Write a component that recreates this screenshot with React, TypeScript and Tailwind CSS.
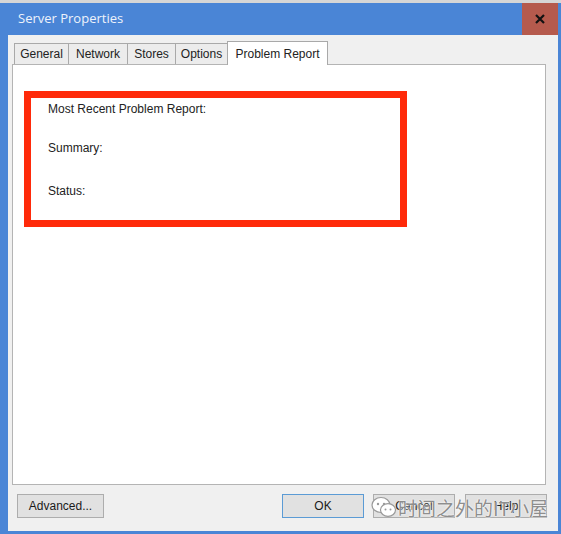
const tabs = [
  { label: "General", w: "w-[55px]" },
  { label: "Network", w: "w-[60px]" },
  { label: "Stores", w: "w-[49px]" },
  { label: "Options", w: "w-[53px]" },
];

function WinButton({ label, className }: { label: string; className: string }) {
  return (
    <button
      className={`h-[24px] bg-[#e1e1e1] border text-[12px] text-[#1a1a1a] flex items-center justify-center ${className}`}
    >
      {label}
    </button>
  );
}

export default function App() {
  return (
    <div
      className="w-[561px] h-[534px] bg-[#d6d6d6] pt-[3px] overflow-hidden"
      style={{ fontFamily: '"Liberation Sans", Arial, sans-serif' }}
    >
      <div className="h-[531px] bg-[#4a85d6] flex flex-col pl-[8px] pr-[3px] pb-[4px]">
        {/* Title bar */}
        <div className="h-[32px] flex items-center justify-between">
          <span
            className="ml-[10px] text-[13px] text-[#eef3fb]"
            style={{ fontFamily: '"Open Sans", "Noto Sans", sans-serif' }}
          >
            Server Properties
          </span>
          <div className="w-[36px] h-[32px] bg-[#b55a4d] flex items-center justify-center">
            <svg width="10" height="10" viewBox="0 0 10 10">
              <path d="M1 1 L9 9 M9 1 L1 9" stroke="#111" strokeWidth="2.2" />
            </svg>
          </div>
        </div>

        {/* Client area */}
        <div className="flex-1 bg-[#f0f0f0] flex flex-col pt-[6px] pb-[13px] relative">
          {/* Tabs */}
          <div className="flex items-end h-[23px] pl-[6px] relative z-10">
            {tabs.map((t) => (
              <div
                key={t.label}
                className={`${t.w} h-[21px] -mr-px bg-[#ececec] border border-b-0 border-[#a9a9a9] text-[12px] text-[#222] flex items-center justify-center`}
              >
                {t.label}
              </div>
            ))}
            <div className="w-[101px] h-[24px] -mb-px bg-white border border-b-0 border-[#a9a9a9] text-[12px] text-[#222] flex items-start justify-center pt-[3px]">
              Problem Report
            </div>
          </div>

          {/* Panel */}
          <div className="ml-[4px] mr-[12px] h-[421px] bg-white border border-[#b4b4b4] pt-[26px] pl-[11px]">
            <div className="w-[383px] h-[136px] border-[7px] border-[#ff2a0a] pl-[17px] pt-[4px] text-[12px] text-[#222] flex flex-col">
              <span className="leading-[14px]">Most Recent Problem Report:</span>
              <span className="leading-[14px] mt-[25px]">Summary:</span>
              <span className="leading-[14px] mt-[29px]">Status:</span>
            </div>
          </div>

          {/* Buttons */}
          <div className="flex items-center mt-[9px] pl-[9px] pr-[11px]">
            <WinButton label="Advanced..." className="w-[87px] border-[#adadad]" />
            <div className="flex-1" />
            <WinButton label="OK" className="w-[82px] border-[#5b9bd5]" />
            <WinButton label="Cancel" className="w-[82px] ml-[9px] border-[#adadad]" />
            <WinButton label="Help" className="w-[82px] ml-[10px] border-[#adadad]" />
          </div>

          {/* Watermark overlay */}
          <div className="absolute left-[363px] top-[460px] h-[24px] flex items-center gap-[1px] pointer-events-none whitespace-nowrap">
            <svg width="26" height="22" viewBox="0 0 26 22">
              <ellipse cx="10" cy="9" rx="9" ry="7.5" fill="#fff" stroke="#9a9a9a" strokeWidth="1.2" />
              <circle cx="7" cy="8" r="1.2" fill="#9a9a9a" />
              <circle cx="13" cy="8" r="1.2" fill="#9a9a9a" />
              <ellipse cx="17" cy="14" rx="7.5" ry="6.3" fill="#fff" stroke="#9a9a9a" strokeWidth="1.2" />
              <circle cx="14.5" cy="13.5" r="1" fill="#9a9a9a" />
              <circle cx="19.5" cy="13.5" r="1" fill="#9a9a9a" />
            </svg>
            <span
              className="text-[19px] leading-none text-[#6f6f6f]/80 whitespace-nowrap"
              style={{
                fontFamily: '"Noto Sans CJK SC", "Noto Sans", sans-serif',
                textShadow: "0 0 2px #fff, 0 0 1px #fff",
              }}
            >
              时间之外的IT小屋
            </span>
          </div>
        </div>
      </div>
    </div>
  );
}
